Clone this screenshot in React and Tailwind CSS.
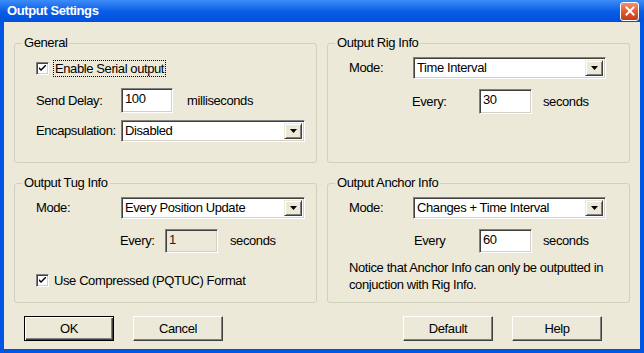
function CheckBox() {
  return (
    <div className="w-[13px] h-[13px] shrink-0 bg-white border border-t-[#808080] border-l-[#808080] border-b-white border-r-white shadow-[inset_1px_1px_0_#404040,inset_-1px_-1px_0_#d4d0c8] flex items-center justify-center">
      <svg width="7" height="7" viewBox="0 0 7 7">
        <path d="M0 2 L0 4 L2 6 L7 1 L7 -1 L2 4 Z" fill="#000" />
      </svg>
    </div>
  );
}

function Edit({ w, value, disabled }) {
  return (
    <div
      className={`${w} h-full shrink-0 border border-t-[#808080] border-l-[#808080] border-b-white border-r-white shadow-[inset_1px_1px_0_#404040,inset_-1px_-1px_0_#d4d0c8] pl-[3px] pt-[2px] leading-[15px] ${
        disabled ? "bg-[#ece9d8] text-[#222]" : "bg-white"
      }`}
    >
      {value}
    </div>
  );
}

function Select({ w, value }) {
  return (
    <div
      className={`${w} h-[22px] shrink-0 flex items-stretch bg-white border border-t-[#808080] border-l-[#808080] border-b-white border-r-white shadow-[inset_1px_1px_0_#404040,inset_-1px_-1px_0_#d4d0c8] p-[2px]`}
    >
      <span className="flex-1 pl-[1px] leading-[16px]">{value}</span>
      <div className="w-[18px] shrink-0 flex items-center justify-center bg-[#ece9d8] border border-t-[#ece9d8] border-l-[#ece9d8] border-b-[#404040] border-r-[#404040] shadow-[inset_1px_1px_0_#fff,inset_-1px_-1px_0_#808080]">
        <svg width="7" height="4" viewBox="0 0 7 4">
          <polygon points="0,0 7,0 3.5,4" fill="#000" />
        </svg>
      </div>
    </div>
  );
}

function Group({ title, children, className }) {
  return (
    <div className={`relative h-[120px] border border-[#d0d0bf] rounded-[3px] ${className}`}>
      <span className="absolute left-[7px] top-[-9px] px-[2px] bg-[#ece9d8] leading-[15px]">
        {title}
      </span>
      {children}
    </div>
  );
}

function Button({ label, isDefault }) {
  return (
    <div
      className={`w-[90px] h-[25px] flex items-center justify-center bg-[#ece9d8] ${
        isDefault
          ? "border border-black shadow-[inset_1px_1px_0_#fff,inset_-1px_-1px_0_#404040,inset_-2px_-2px_0_#808080]"
          : "border border-t-white border-l-white border-b-[#404040] border-r-[#404040] shadow-[inset_-1px_-1px_0_#808080]"
      }`}
    >
      {label}
    </div>
  );
}

export default function App() {
  return (
    <div className="w-[644px] h-[353px] flex flex-col bg-[#0055e5] font-['Liberation_Sans',Arial,sans-serif] text-[13px] tracking-[-0.4px] text-black select-none">
      <div className="h-[22px] shrink-0 flex items-center bg-linear-to-b from-[#3d8cf7] via-[#0a5de6] to-[#0050dd] pl-[7px] pr-[5px]">
        <span className="flex-1 text-white font-bold text-[13px] leading-[16px]">Output Settings</span>
        <div className="w-[19px] h-[19px] rounded-[3px] border border-white bg-linear-to-b from-[#f09070] via-[#e05a34] to-[#c03c18] flex items-center justify-center">
          <svg width="10" height="10" viewBox="0 0 10 10">
            <path d="M1.5 1.5 L8.5 8.5 M8.5 1.5 L1.5 8.5" stroke="#fff" strokeWidth="2" strokeLinecap="square" />
          </svg>
        </div>
      </div>

      <div className="flex-1 mx-[4px] mb-[4px] bg-[#ece9d8] flex flex-col">
        <div className="grid grid-cols-[303px_303px] gap-x-[10px] gap-y-[20px] pl-[10px] pt-[21px]">
          <Group title="General" className="pt-[16px] pl-[21px]">
            <div className="flex items-center h-[17px]">
              <CheckBox />
              <span className="ml-[4px] px-[1px] border border-dotted border-black leading-[15px]">
                Enable Serial output
              </span>
            </div>
            <div className="flex items-center h-[25px] mt-[11px]">
              <span className="w-[85px] shrink-0">Send Delay:</span>
              <Edit w="w-[52px]" value="100" />
              <span className="ml-[14px]">milliseconds</span>
            </div>
            <div className="flex items-center mt-[7px]">
              <span className="w-[85px] shrink-0">Encapsulation:</span>
              <Select w="w-[184px]" value="Disabled" />
            </div>
          </Group>

          <Group title="Output Rig Info" className="pt-[13px] pl-[21px]">
            <div className="flex items-center">
              <span className="w-[64px] shrink-0">Mode:</span>
              <Select w="w-[193px]" value="Time Interval" />
            </div>
            <div className="flex items-center h-[25px] mt-[10px] pl-[63px]">
              <span className="w-[67px] shrink-0">Every:</span>
              <Edit w="w-[53px]" value="30" />
              <span className="ml-[11px]">seconds</span>
            </div>
          </Group>

          <Group title="Output Tug Info" className="pt-[13px] pl-[21px]">
            <div className="flex items-center">
              <span className="w-[85px] shrink-0">Mode:</span>
              <Select w="w-[184px]" value="Every Position Update" />
            </div>
            <div className="flex items-center h-[24px] mt-[10px] pl-[84px]">
              <span className="w-[45px] shrink-0">Every:</span>
              <Edit w="w-[53px]" value="1" disabled />
              <span className="ml-[12px]">seconds</span>
            </div>
            <div className="flex items-center h-[17px] mt-[19px]">
              <CheckBox />
              <span className="ml-[5px] leading-[15px]">Use Compressed (PQTUC) Format</span>
            </div>
          </Group>

          <Group title="Output Anchor Info" className="pt-[13px] pl-[21px]">
            <div className="flex items-center">
              <span className="w-[64px] shrink-0">Mode:</span>
              <Select w="w-[193px]" value="Changes + Time Interval" />
            </div>
            <div className="flex items-center h-[24px] mt-[10px] pl-[65px]">
              <span className="w-[65px] shrink-0">Every</span>
              <Edit w="w-[53px]" value="60" />
              <span className="ml-[11px]">seconds</span>
            </div>
            <p className="leading-[17px] mt-[6px] pr-[8px]">
              Notice that Anchor Info can only be outputted in conjuction with Rig Info.
            </p>
          </Group>
        </div>

        <div className="flex items-center mt-[13px] pl-[20px] pr-[38px]">
          <div className="flex gap-[19px]">
            <Button label="OK" isDefault />
            <Button label="Cancel" />
          </div>
          <div className="flex-1" />
          <div className="flex gap-[19px]">
            <Button label="Default" />
            <Button label="Help" />
          </div>
        </div>
      </div>
    </div>
  );
}
